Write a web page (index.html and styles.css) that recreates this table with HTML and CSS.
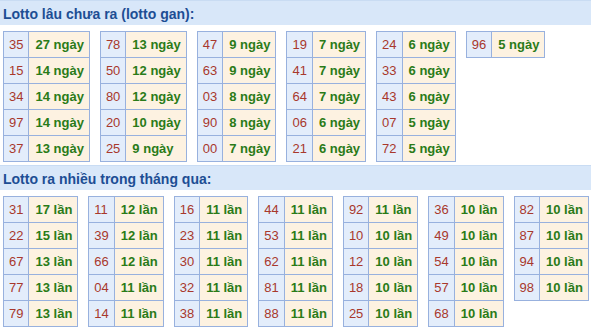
FILE: index.html
```html
<!DOCTYPE html>
<html lang="vi">
<head>
<meta charset="utf-8">
<title>Lotto</title>
<link rel="stylesheet" href="styles.css">
</head>
<body>
<div class="section">
  <div class="head">Lotto lâu chưa ra (lotto gan):</div>
  <div class="tables">
    <table class="lt"><tr><td class="n">35</td><td class="v">27 ngày</td></tr><tr><td class="n">15</td><td class="v">14 ngày</td></tr><tr><td class="n">34</td><td class="v">14 ngày</td></tr><tr><td class="n">97</td><td class="v">14 ngày</td></tr><tr><td class="n">37</td><td class="v">13 ngày</td></tr></table>
    <table class="lt"><tr><td class="n">78</td><td class="v">13 ngày</td></tr><tr><td class="n">50</td><td class="v">12 ngày</td></tr><tr><td class="n">80</td><td class="v">12 ngày</td></tr><tr><td class="n">20</td><td class="v">10 ngày</td></tr><tr><td class="n">25</td><td class="v">9 ngày</td></tr></table>
    <table class="lt"><tr><td class="n">47</td><td class="v">9 ngày</td></tr><tr><td class="n">63</td><td class="v">9 ngày</td></tr><tr><td class="n">03</td><td class="v">8 ngày</td></tr><tr><td class="n">90</td><td class="v">8 ngày</td></tr><tr><td class="n">00</td><td class="v">7 ngày</td></tr></table>
    <table class="lt"><tr><td class="n">19</td><td class="v">7 ngày</td></tr><tr><td class="n">41</td><td class="v">7 ngày</td></tr><tr><td class="n">64</td><td class="v">7 ngày</td></tr><tr><td class="n">06</td><td class="v">6 ngày</td></tr><tr><td class="n">21</td><td class="v">6 ngày</td></tr></table>
    <table class="lt"><tr><td class="n">24</td><td class="v">6 ngày</td></tr><tr><td class="n">33</td><td class="v">6 ngày</td></tr><tr><td class="n">43</td><td class="v">6 ngày</td></tr><tr><td class="n">07</td><td class="v">5 ngày</td></tr><tr><td class="n">72</td><td class="v">5 ngày</td></tr></table>
    <table class="lt"><tr><td class="n">96</td><td class="v">5 ngày</td></tr></table>
  </div>
</div>
<div class="section">
  <div class="head">Lotto ra nhiều trong tháng qua:</div>
  <div class="tables">
    <table class="lt"><tr><td class="n">31</td><td class="v">17 lần</td></tr><tr><td class="n">22</td><td class="v">15 lần</td></tr><tr><td class="n">67</td><td class="v">13 lần</td></tr><tr><td class="n">77</td><td class="v">13 lần</td></tr><tr><td class="n">79</td><td class="v">13 lần</td></tr></table>
    <table class="lt"><tr><td class="n">11</td><td class="v">12 lần</td></tr><tr><td class="n">39</td><td class="v">12 lần</td></tr><tr><td class="n">66</td><td class="v">12 lần</td></tr><tr><td class="n">04</td><td class="v">11 lần</td></tr><tr><td class="n">14</td><td class="v">11 lần</td></tr></table>
    <table class="lt"><tr><td class="n">16</td><td class="v">11 lần</td></tr><tr><td class="n">23</td><td class="v">11 lần</td></tr><tr><td class="n">30</td><td class="v">11 lần</td></tr><tr><td class="n">32</td><td class="v">11 lần</td></tr><tr><td class="n">38</td><td class="v">11 lần</td></tr></table>
    <table class="lt"><tr><td class="n">44</td><td class="v">11 lần</td></tr><tr><td class="n">53</td><td class="v">11 lần</td></tr><tr><td class="n">62</td><td class="v">11 lần</td></tr><tr><td class="n">81</td><td class="v">11 lần</td></tr><tr><td class="n">88</td><td class="v">11 lần</td></tr></table>
    <table class="lt"><tr><td class="n">92</td><td class="v">11 lần</td></tr><tr><td class="n">10</td><td class="v">10 lần</td></tr><tr><td class="n">12</td><td class="v">10 lần</td></tr><tr><td class="n">18</td><td class="v">10 lần</td></tr><tr><td class="n">25</td><td class="v">10 lần</td></tr></table>
    <table class="lt"><tr><td class="n">36</td><td class="v">10 lần</td></tr><tr><td class="n">49</td><td class="v">10 lần</td></tr><tr><td class="n">54</td><td class="v">10 lần</td></tr><tr><td class="n">57</td><td class="v">10 lần</td></tr><tr><td class="n">68</td><td class="v">10 lần</td></tr></table>
    <table class="lt"><tr><td class="n">82</td><td class="v">10 lần</td></tr><tr><td class="n">87</td><td class="v">10 lần</td></tr><tr><td class="n">94</td><td class="v">10 lần</td></tr><tr><td class="n">98</td><td class="v">10 lần</td></tr></table>
  </div>
</div>
</body>
</html>
```

FILE: styles.css
```css
html, body {
  margin: 0;
  padding: 0;
  background: #ffffff;
  font-family: "Liberation Sans", Arial, sans-serif;
}

.section {
  margin-bottom: 3px;
}

.head {
  height: 25px;
  line-height: 26px;
  padding-left: 3px;
  background: #d8e7f9;
  border-top: 1px solid #c9dcf3;
  box-sizing: border-box;
  color: #1d4e94;
  font-size: 14px;
  font-weight: bold;
  margin-bottom: 6px;
}

.tables {
  display: flex;
  align-items: flex-start;
  gap: 10px;
  padding-left: 3px;
}

.lt {
  border-collapse: collapse;
  flex: none;
}

.lt td {
  height: 25px;
  padding: 0 5px;
  border: 1px solid #98b1de;
  font-size: 13px;
  white-space: nowrap;
}

.n {
  background: #e3edfb;
  color: #a8382c;
}

.v {
  background: #fdf2e1;
  color: #2a7b18;
  font-weight: bold;
}

.lt td.v {
  padding-left: 6px;
}
```
